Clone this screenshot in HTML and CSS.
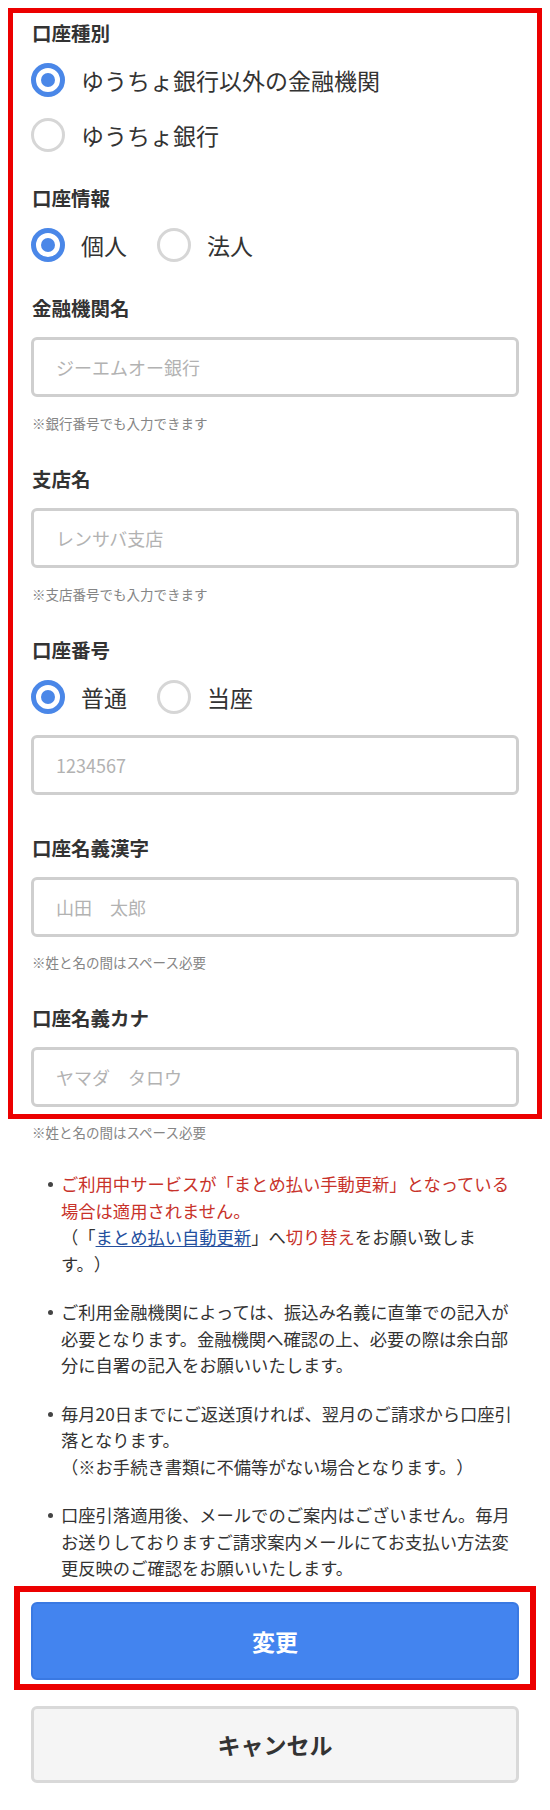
FILE: index.html
```html
<!DOCTYPE html>
<html lang="ja">
<head>
<meta charset="utf-8">
<title>口座情報</title>
<link rel="stylesheet" href="styles.css">
</head>
<body>
<div class="page">
  <div class="hl-box">
    <div class="field">
      <div class="label">口座種別</div>
      <div class="radios stack">
        <label class="radio"><span class="mark on"></span><span class="rtext">ゆうちょ銀行以外の金融機関</span></label>
        <label class="radio"><span class="mark"></span><span class="rtext">ゆうちょ銀行</span></label>
      </div>
    </div>
    <div class="field">
      <div class="label">口座情報</div>
      <div class="radios row">
        <label class="radio"><span class="mark on"></span><span class="rtext">個人</span></label>
        <label class="radio"><span class="mark"></span><span class="rtext">法人</span></label>
      </div>
    </div>
    <div class="field">
      <div class="label">金融機関名</div>
      <input class="input" type="text" placeholder="ジーエムオー銀行">
      <div class="note">※銀行番号でも入力できます</div>
    </div>
    <div class="field">
      <div class="label">支店名</div>
      <input class="input" type="text" placeholder="レンサバ支店">
      <div class="note">※支店番号でも入力できます</div>
    </div>
    <div class="field">
      <div class="label">口座番号</div>
      <div class="radios row">
        <label class="radio"><span class="mark on"></span><span class="rtext">普通</span></label>
        <label class="radio"><span class="mark"></span><span class="rtext">当座</span></label>
      </div>
      <input class="input input-after-radio" type="text" placeholder="1234567">
    </div>
    <div class="field field-wide">
      <div class="label">口座名義漢字</div>
      <input class="input" type="text" placeholder="山田　太郎">
      <div class="note note-tight">※姓と名の間はスペース必要</div>
    </div>
    <div class="field">
      <div class="label">口座名義カナ</div>
      <input class="input" type="text" placeholder="ヤマダ　タロウ">
    </div>
  </div>
  <div class="note note-out">※姓と名の間はスペース必要</div>

  <ul class="notices">
    <li><span class="red">ご利用中サービスが「まとめ払い手動更新」となっている場合は適用されません。</span><br><span>（「</span><a class="link" href="#">まとめ払い自動更新</a><span>」へ</span><span class="red">切り替え</span><span>をお願い致しま</span><span>す。）</span></li>
    <li>ご利用金融機関によっては、振込み名義に直筆での記入が必要となります。金融機関へ確認の上、必要の際は余白部分に自署の記入をお願いいたします。</li>
    <li>毎月20日までにご返送頂ければ、翌月のご請求から口座引落となります。<br>（※お手続き書類に不備等がない場合となります。）</li>
    <li>口座引落適用後、メールでのご案内はございません。毎月お送りしておりますご請求案内メールにてお支払い方法変更反映のご確認をお願いいたします。</li>
  </ul>

  <div class="hl-btn">
    <button class="btn btn-primary" type="button">変更</button>
  </div>
  <button class="btn btn-cancel" type="button">キャンセル</button>
</div>
</body>
</html>
```

FILE: styles.css
```css
html, body {
  margin: 0;
  padding: 0;
  background: #ffffff;
}

body {
  font-family: "Noto Sans CJK JP", "Noto Sans", sans-serif;
  color: #333333;
  text-spacing-trim: space-all;
}

.page {
  padding: 8px 8px 0;
}

.hl-box {
  border: 5px solid #ec0000;
  padding: 6px 18px 7px;
}

.field {
  display: flex;
  flex-direction: column;
  margin-top: 32px;
}

.field:first-child {
  margin-top: 0;
}

.field-wide {
  margin-top: 39px;
}

.label {
  font-size: 19.5px;
  font-weight: 700;
  line-height: 28px;
  color: #333333;
  padding-left: 1px;
}

.radios {
  display: flex;
  margin-top: 16px;
}

.radios.stack {
  flex-direction: column;
  gap: 21px;
}

.radios.row {
  flex-direction: row;
  gap: 30px;
}

.radio {
  display: flex;
  align-items: center;
  gap: 16px;
  height: 34px;
}

.mark {
  box-sizing: border-box;
  width: 34px;
  height: 34px;
  border-radius: 50%;
  border: 3px solid #d6d6d6;
  background: #ffffff;
  flex: none;
  display: flex;
  align-items: center;
  justify-content: center;
}

.mark.on {
  border: 5px solid #4a87e8;
}

.mark.on::after {
  content: "";
  width: 14px;
  height: 14px;
  border-radius: 50%;
  background: #4a87e8;
}

.rtext {
  font-size: 23px;
  line-height: 34px;
  color: #333333;
}

.input {
  box-sizing: border-box;
  width: 100%;
  height: 60px;
  margin: 15px 0 0;
  border: 3px solid #cfcfcf;
  border-radius: 6px;
  padding: 0 0 0 22px;
  font-family: "Noto Sans CJK JP", "Noto Sans", sans-serif;
  font-size: 18px;
  color: #333333;
  background: #ffffff;
  outline: none;
}

.input::placeholder {
  color: #b2b2b2;
}

.input-after-radio {
  margin-top: 21px;
}

.note {
  margin-top: 16px;
  font-size: 13.5px;
  line-height: 20px;
  color: #858585;
  padding-left: 1px;
}

.note-tight {
  margin-top: 15px;
}

.note-out {
  margin-top: 3px;
  padding-left: 24px;
}

.notices {
  list-style: none;
  margin: 29px 0 0;
  padding: 0 23px 0 53px;
}

.notices li {
  position: relative;
  font-size: 17.3px;
  line-height: 26.5px;
  color: #333333;
}

.notices li + li {
  margin-top: 22px;
}

.notices li::before {
  content: "";
  position: absolute;
  left: -13px;
  top: 11px;
  width: 5px;
  height: 5px;
  border-radius: 50%;
  background: #444444;
}

.red {
  color: #c8322a;
}

.link {
  color: #234f9e;
  text-decoration: underline;
  text-underline-offset: 2px;
}

.hl-btn {
  margin: 4px 6px 0;
  border: 6px solid #ec0000;
  padding: 10px 11px 4px;
}

.btn {
  display: flex;
  align-items: center;
  justify-content: center;
  box-sizing: border-box;
  width: 100%;
  font-family: "Noto Sans CJK JP", "Noto Sans", sans-serif;
  font-size: 23px;
  font-weight: 700;
  border-radius: 6px;
  cursor: pointer;
}

.btn-primary {
  height: 78px;
  background: #4384ef;
  border: 2px solid #3a79e2;
  color: #ffffff;
}

.btn-cancel {
  height: 77px;
  margin: 16px 23px 0 23px;
  width: calc(100% - 46px);
  background: #f5f5f5;
  border: 3px solid #d9d9d9;
  color: #333333;
}
```
